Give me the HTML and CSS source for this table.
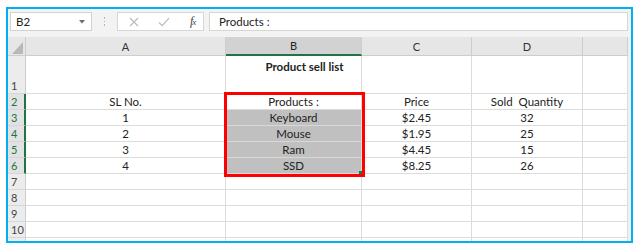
FILE: index.html
```html
<!DOCTYPE html>
<html>
<head>
<meta charset="utf-8">
<link rel="stylesheet" href="styles.css">
</head>
<body>
<div class="frame">
  <div class="fbar">
    <div class="namebox"><span>B2</span>
      <svg class="caret" width="6" height="4" viewBox="0 0 6 4"><path d="M0 0H6L3 3.5Z" fill="#6d6d6d"/></svg>
    </div>
    <div class="dots"><i></i><i></i><i></i></div>
    <div class="fbtns">
      <svg width="10" height="10" viewBox="0 0 10 10"><path d="M1 1L9 9M9 1L1 9" stroke="#b9b9b9" stroke-width="1.1" fill="none"/></svg>
      <svg width="12" height="10" viewBox="0 0 12 10"><path d="M1 5.5L4.2 8.6L11 1.2" stroke="#b9b9b9" stroke-width="1.1" fill="none"/></svg>
      <span class="fx"><i>f</i><span class="x">x</span></span>
    </div>
    <div class="finput">Products :</div>
  </div>
  <div class="sheet">
    <div class="hd corner"><svg width="11" height="12" viewBox="0 0 11 12"><path d="M11 0V12H0Z" fill="#b8b8b8"/></svg></div>
    <div class="hd">A</div><div class="hd sel">B</div><div class="hd">C</div><div class="hd">D</div><div class="hd"></div>

    <div class="rh tall">1</div><div class="c"></div><div class="c title">Product sell list</div><div class="c"></div><div class="c"></div><div class="c"></div>

    <div class="rh on">2</div><div class="c">SL No.</div><div class="c">Products :</div><div class="c">Price</div><div class="c">Sold&nbsp; Quantity</div><div class="c"></div>
    <div class="rh on">3</div><div class="c">1</div><div class="c g">Keyboard</div><div class="c">$2.45</div><div class="c">32</div><div class="c"></div>
    <div class="rh on">4</div><div class="c">2</div><div class="c g">Mouse</div><div class="c">$1.95</div><div class="c">25</div><div class="c"></div>
    <div class="rh on">5</div><div class="c">3</div><div class="c g">Ram</div><div class="c">$4.45</div><div class="c">15</div><div class="c"></div>
    <div class="rh on">6</div><div class="c">4</div><div class="c g">SSD</div><div class="c">$8.25</div><div class="c">26</div><div class="c"></div>
    <div class="rh">7</div><div class="c"></div><div class="c"></div><div class="c"></div><div class="c"></div><div class="c"></div>
    <div class="rh">8</div><div class="c"></div><div class="c"></div><div class="c"></div><div class="c"></div><div class="c"></div>
    <div class="rh">9</div><div class="c"></div><div class="c"></div><div class="c"></div><div class="c"></div><div class="c"></div>
    <div class="rh">10</div><div class="c"></div><div class="c"></div><div class="c"></div><div class="c"></div><div class="c"></div>
    <div class="rh"></div><div class="c"></div><div class="c"></div><div class="c"></div><div class="c"></div><div class="c"></div>

    <div class="redbox"><span class="handle"></span></div>
  </div>
</div>
</body>
</html>
```
FILE: styles.css
```css
* { box-sizing: border-box; }
html, body { margin: 0; background: #fff; }
body { padding: 7px 0 0 6px; font-family: Lato, "Open Sans", sans-serif; color: #222; }

.frame {
  width: 627px;
  height: 236px;
  border: 2px solid #00b0f0;
  background: #f0f0f0;
  overflow: hidden;
  display: flex;
  flex-direction: column;
}

.fbar {
  height: 28px;
  flex: none;
  display: flex;
  align-items: flex-start;
  padding: 3px 3px 0 2px;
  background: #f3f3f3;
}
.namebox {
  width: 82px;
  height: 19px;
  background: #fff;
  border: 1px solid #d2d2d2;
  display: flex;
  align-items: center;
  justify-content: space-between;
  padding: 0 6px 0 5px;
  font-size: 11.5px;
  color: #222;
}
.caret { margin-top: 1px; }
.dots {
  width: 25px;
  height: 19px;
  display: flex;
  flex-direction: column;
  align-items: center;
  justify-content: center;
  gap: 2px;
}
.dots i { width: 1.5px; height: 1.5px; background: #b5b5b5; display: block; }
.fbtns {
  width: 87px;
  height: 19px;
  background: #fff;
  border: 1px solid #d6d6d6;
  display: flex;
  align-items: center;
  padding: 0 0 0 11px;
  gap: 19px;
}
.fx { font-family: "Liberation Serif", serif; font-size: 12px; color: #444; letter-spacing: -1px; margin-left: 1px; }
.fx .x { font-style: italic; font-size: 9px; }
.finput {
  flex: 1;
  margin-left: 5px;
  height: 19px;
  background: #fff;
  border: 1px solid #d6d6d6;
  font-size: 11.5px;
  line-height: 17px;
  padding-left: 9px;
  color: #222;
}

.sheet {
  flex: 1;
  position: relative;
  display: grid;
  grid-template-columns: 18px 200px 136px 110px 111px 45px;
  grid-template-rows: 19px 38px repeat(10, 16px);
  font-size: 11.5px;
  overflow: hidden;
  background: #fff;
  border-right: 3px solid #f0f0f0;
  align-content: start;
}
.hd {
  background: #e6e6e6;
  border-right: 1px solid #cdcdcd;
  border-bottom: 1px solid #cdcdcd;
  display: flex;
  align-items: center;
  justify-content: center;
  color: #333;
  font-size: 11px;
}
.hd.sel { background: #d2d2d2; border-bottom: 2px solid #217346; color: #222; }
.corner { align-items: flex-end; justify-content: flex-end; padding: 0 2px 1px 0; }
.rh {
  background: #ececec;
  border-right: 1px solid #cdcdcd;
  border-bottom: 1px solid #d6d6d6;
  font-size: 11px;
  color: #444;
  padding-left: 3px;
  display: flex;
  align-items: flex-end;
  line-height: 15px;
}
.rh.on { color: #217346; border-right: 2px solid #217346; background: #e2e2e2; }
.c {
  border-right: 1px solid #dcdcdc;
  border-bottom: 1px solid #dcdcdc;
  display: flex;
  align-items: center;
  justify-content: center;
  line-height: 15px;
}
.c.g { background: #c0c0c0; border-bottom-color: #d8d8d8; }
.c.title { font-weight: bold; align-items: flex-start; padding: 3px 0 0 22px; }

.redbox {
  position: absolute;
  grid-column: 3 / 4;
  grid-row: 3 / 8;
  top: -2px;
  left: -2px;
  right: -3px;
  bottom: -3px;
  border: 3px solid #ff0000;
  pointer-events: none;
}
.handle {
  position: absolute;
  right: 0;
  bottom: 0;
  width: 3px;
  height: 3px;
  background: #217346;
}
```
